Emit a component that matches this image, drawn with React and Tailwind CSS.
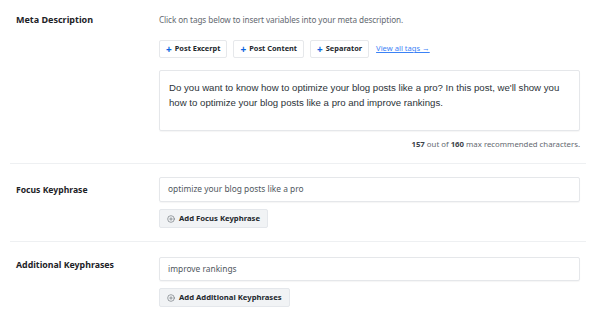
import React from 'react'
import { CirclePlus } from 'lucide-react'

const TagButton = ({ label }) => (
  <button className="h-[18px] px-[6px] flex items-center gap-[3px] bg-white border border-[#e6e8eb] rounded-[2px] text-[7.4px] font-bold text-[#23282d]">
    <span className="text-[#0a64e0] text-[10px] font-bold leading-none">+</span>
    {label}
  </button>
)

const AddButton = ({ label }) => (
  <button className="h-[19px] px-[7px] flex items-center gap-[4px] bg-[#f1f3f5] border border-[#e4e7eb] rounded-[2px] text-[7.7px] font-bold text-[#23282d]">
    <CirclePlus size={8} strokeWidth={1.6} className="text-[#50575e]" />
    {label}
  </button>
)

export default function App() {
  return (
    <div className="w-[600px] h-[321px] bg-white px-[10px] font-['Noto_Sans',sans-serif] text-[#1d2327]">
      <div className="w-[576px]">
        {/* Meta description */}
        <div className="flex pt-[14px] pb-[13px] border-b border-[#eef0f2]">
          <div className="w-[149px] pl-[6px] text-[9px] font-bold leading-[12px]">Meta Description</div>
          <div className="w-[421px]">
            <p className="text-[8.2px] text-[#646970] leading-[12px] tracking-[-0.1px]">
              Click on tags below to insert variables into your meta description.
            </p>
            <div className="flex items-center gap-[6px] mt-[14px]">
              <TagButton label="Post Excerpt" />
              <TagButton label="Post Content" />
              <TagButton label="Separator" />
              <a className="ml-[1px] text-[7.6px] text-[#3b82f6] underline">View all tags →</a>
            </div>
            <div className="mt-[12px] h-[61px] border border-[#e5e7ea] rounded-[2px] shadow-[0_1px_1px_rgba(0,0,0,0.04)] px-[9px] pt-[9px] font-['Liberation_Sans',sans-serif] text-[9.65px] leading-[15px] text-[#2c3338]">
              Do you want to know how to optimize your blog posts like a pro? In this post, we'll show you how to optimize your blog posts like a pro and improve rankings.
            </div>
            <p className="mt-[7px] text-right text-[7.8px] text-[#646970] leading-[12px]">
              <span className="font-bold text-[#3c434a]">157</span> out of <span className="font-bold text-[#3c434a]">160</span> max recommended characters.
            </p>
          </div>
        </div>

        {/* Focus keyphrase */}
        <div className="flex pt-[13px] pb-[13px] border-b border-[#eef0f2]">
          <div className="w-[149px] pl-[6px] pt-[7px] text-[8.6px] font-bold leading-[12px]">Focus Keyphrase</div>
          <div className="w-[421px]">
            <div className="h-[25px] border border-[#e5e7ea] rounded-[2px] shadow-[0_1px_1px_rgba(0,0,0,0.04)] px-[8px] flex items-center text-[8.4px] text-[#50575e]">
              optimize your blog posts like a pro
            </div>
            <div className="flex mt-[7px]">
              <AddButton label="Add Focus Keyphrase" />
            </div>
          </div>
        </div>

        {/* Additional keyphrases */}
        <div className="flex pt-[15px]">
          <div className="w-[149px] pl-[6px] pt-[2px] text-[8.8px] font-bold leading-[12px]">Additional Keyphrases</div>
          <div className="w-[421px]">
            <div className="h-[24px] border border-[#e5e7ea] rounded-[2px] shadow-[0_1px_1px_rgba(0,0,0,0.04)] px-[8px] flex items-center text-[8.4px] text-[#50575e]">
              improve rankings
            </div>
            <div className="flex mt-[7px]">
              <AddButton label="Add Additional Keyphrases" />
            </div>
          </div>
        </div>
      </div>
    </div>
  )
}
